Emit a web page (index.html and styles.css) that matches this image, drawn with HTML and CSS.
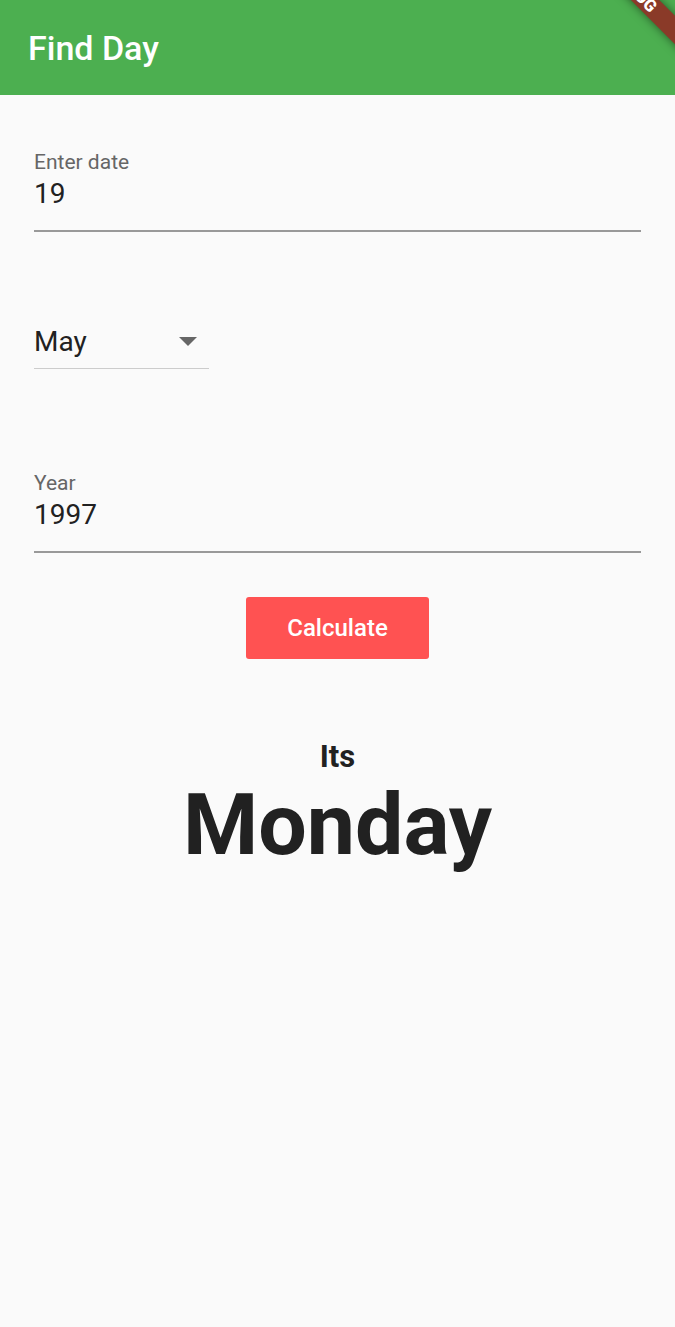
FILE: index.html
```html
<!DOCTYPE html>
<html lang="en">
<head>
<meta charset="utf-8">
<meta name="viewport" content="width=device-width, initial-scale=1">
<title>Find Day</title>
<link rel="stylesheet" href="styles.css">
</head>
<body>
<header class="app-bar">
  <h1 class="app-title">Find Day</h1>
  <div class="debug-banner">DEBUG</div>
</header>
<main class="content">
  <form class="form">
    <div class="field">
      <label class="field-label" for="date">Enter date</label>
      <input class="field-input" id="date" type="text" inputmode="numeric" value="19">
    </div>
    <div class="month">
      <select class="month-select" aria-label="Month">
        <option>January</option>
        <option>February</option>
        <option>March</option>
        <option>April</option>
        <option selected>May</option>
        <option>June</option>
        <option>July</option>
        <option>August</option>
        <option>September</option>
        <option>October</option>
        <option>November</option>
        <option>December</option>
      </select>
      <svg class="month-arrow" viewBox="0 0 18 9" aria-hidden="true"><path d="M0 0h18L9 9z"/></svg>
    </div>
    <div class="field">
      <label class="field-label" for="year">Year</label>
      <input class="field-input" id="year" type="text" inputmode="numeric" value="1997">
    </div>
    <button class="calculate" type="button">Calculate</button>
  </form>
  <section class="result">
    <p class="result-lead">Its</p>
    <p class="result-day">Monday</p>
  </section>
</main>
</body>
</html>
```

FILE: styles.css
```css
* {
  box-sizing: border-box;
}

body {
  margin: 0;
  min-height: 100vh;
  background: #fafafa;
  color: #212121;
  font-family: Roboto, "Liberation Sans", sans-serif;
}

.app-bar {
  position: relative;
  display: flex;
  align-items: center;
  height: 95px;
  padding: 0 28px;
  overflow: hidden;
  background: #4caf50;
  color: #fff;
}

.app-title {
  margin: 0;
  font-size: 34px;
  line-height: 40px;
  font-weight: 500;
}

.debug-banner {
  position: absolute;
  top: -20px;
  right: -60px;
  width: 200px;
  height: 20px;
  background: #8a3a28;
  box-shadow: 0 0 10px rgba(0, 0, 0, 0.5);
  font-size: 17px;
  line-height: 20px;
  font-weight: 900;
  text-align: center;
  transform: rotate(45deg);
}

.content {
  padding: 55px 34px 0;
}

.form {
  display: flex;
  flex-direction: column;
}

.field {
  display: flex;
  flex-direction: column;
}

.field-label {
  color: #666;
  font-size: 21px;
  line-height: 24px;
}

.field-input {
  width: 100%;
  height: 58px;
  padding: 0 0 18px;
  border: 0;
  border-bottom: 2px solid #999;
  border-radius: 0;
  outline: 0;
  background: transparent;
  color: inherit;
  font-family: inherit;
  font-size: 28px;
}

.month {
  position: relative;
  width: 175px;
  margin: 85px 0 102px;
}

.month-select {
  display: block;
  width: 100%;
  height: 52px;
  padding: 0 0 3px;
  appearance: none;
  border: 0;
  border-bottom: 1px solid #ccc;
  border-radius: 0;
  outline: 0;
  background: transparent;
  color: inherit;
  font-family: inherit;
  font-size: 28px;
}

.month-arrow {
  position: absolute;
  top: 20px;
  right: 12px;
  width: 18px;
  height: 9px;
  fill: #666;
  pointer-events: none;
}

.calculate {
  align-self: center;
  margin-top: 44px;
  padding: 16px 41px;
  border: 0;
  border-radius: 3px;
  background: #ff5252;
  color: #fff;
  font-family: inherit;
  font-size: 24px;
  line-height: 30px;
  font-weight: 500;
}

.result {
  margin-top: 80px;
  text-align: center;
}

.result-lead,
.result-day {
  margin: 0;
  font-weight: 700;
}

.result-lead {
  font-size: 31px;
  line-height: 36px;
}

.result-day {
  font-size: 86px;
  line-height: 100px;
}
```
